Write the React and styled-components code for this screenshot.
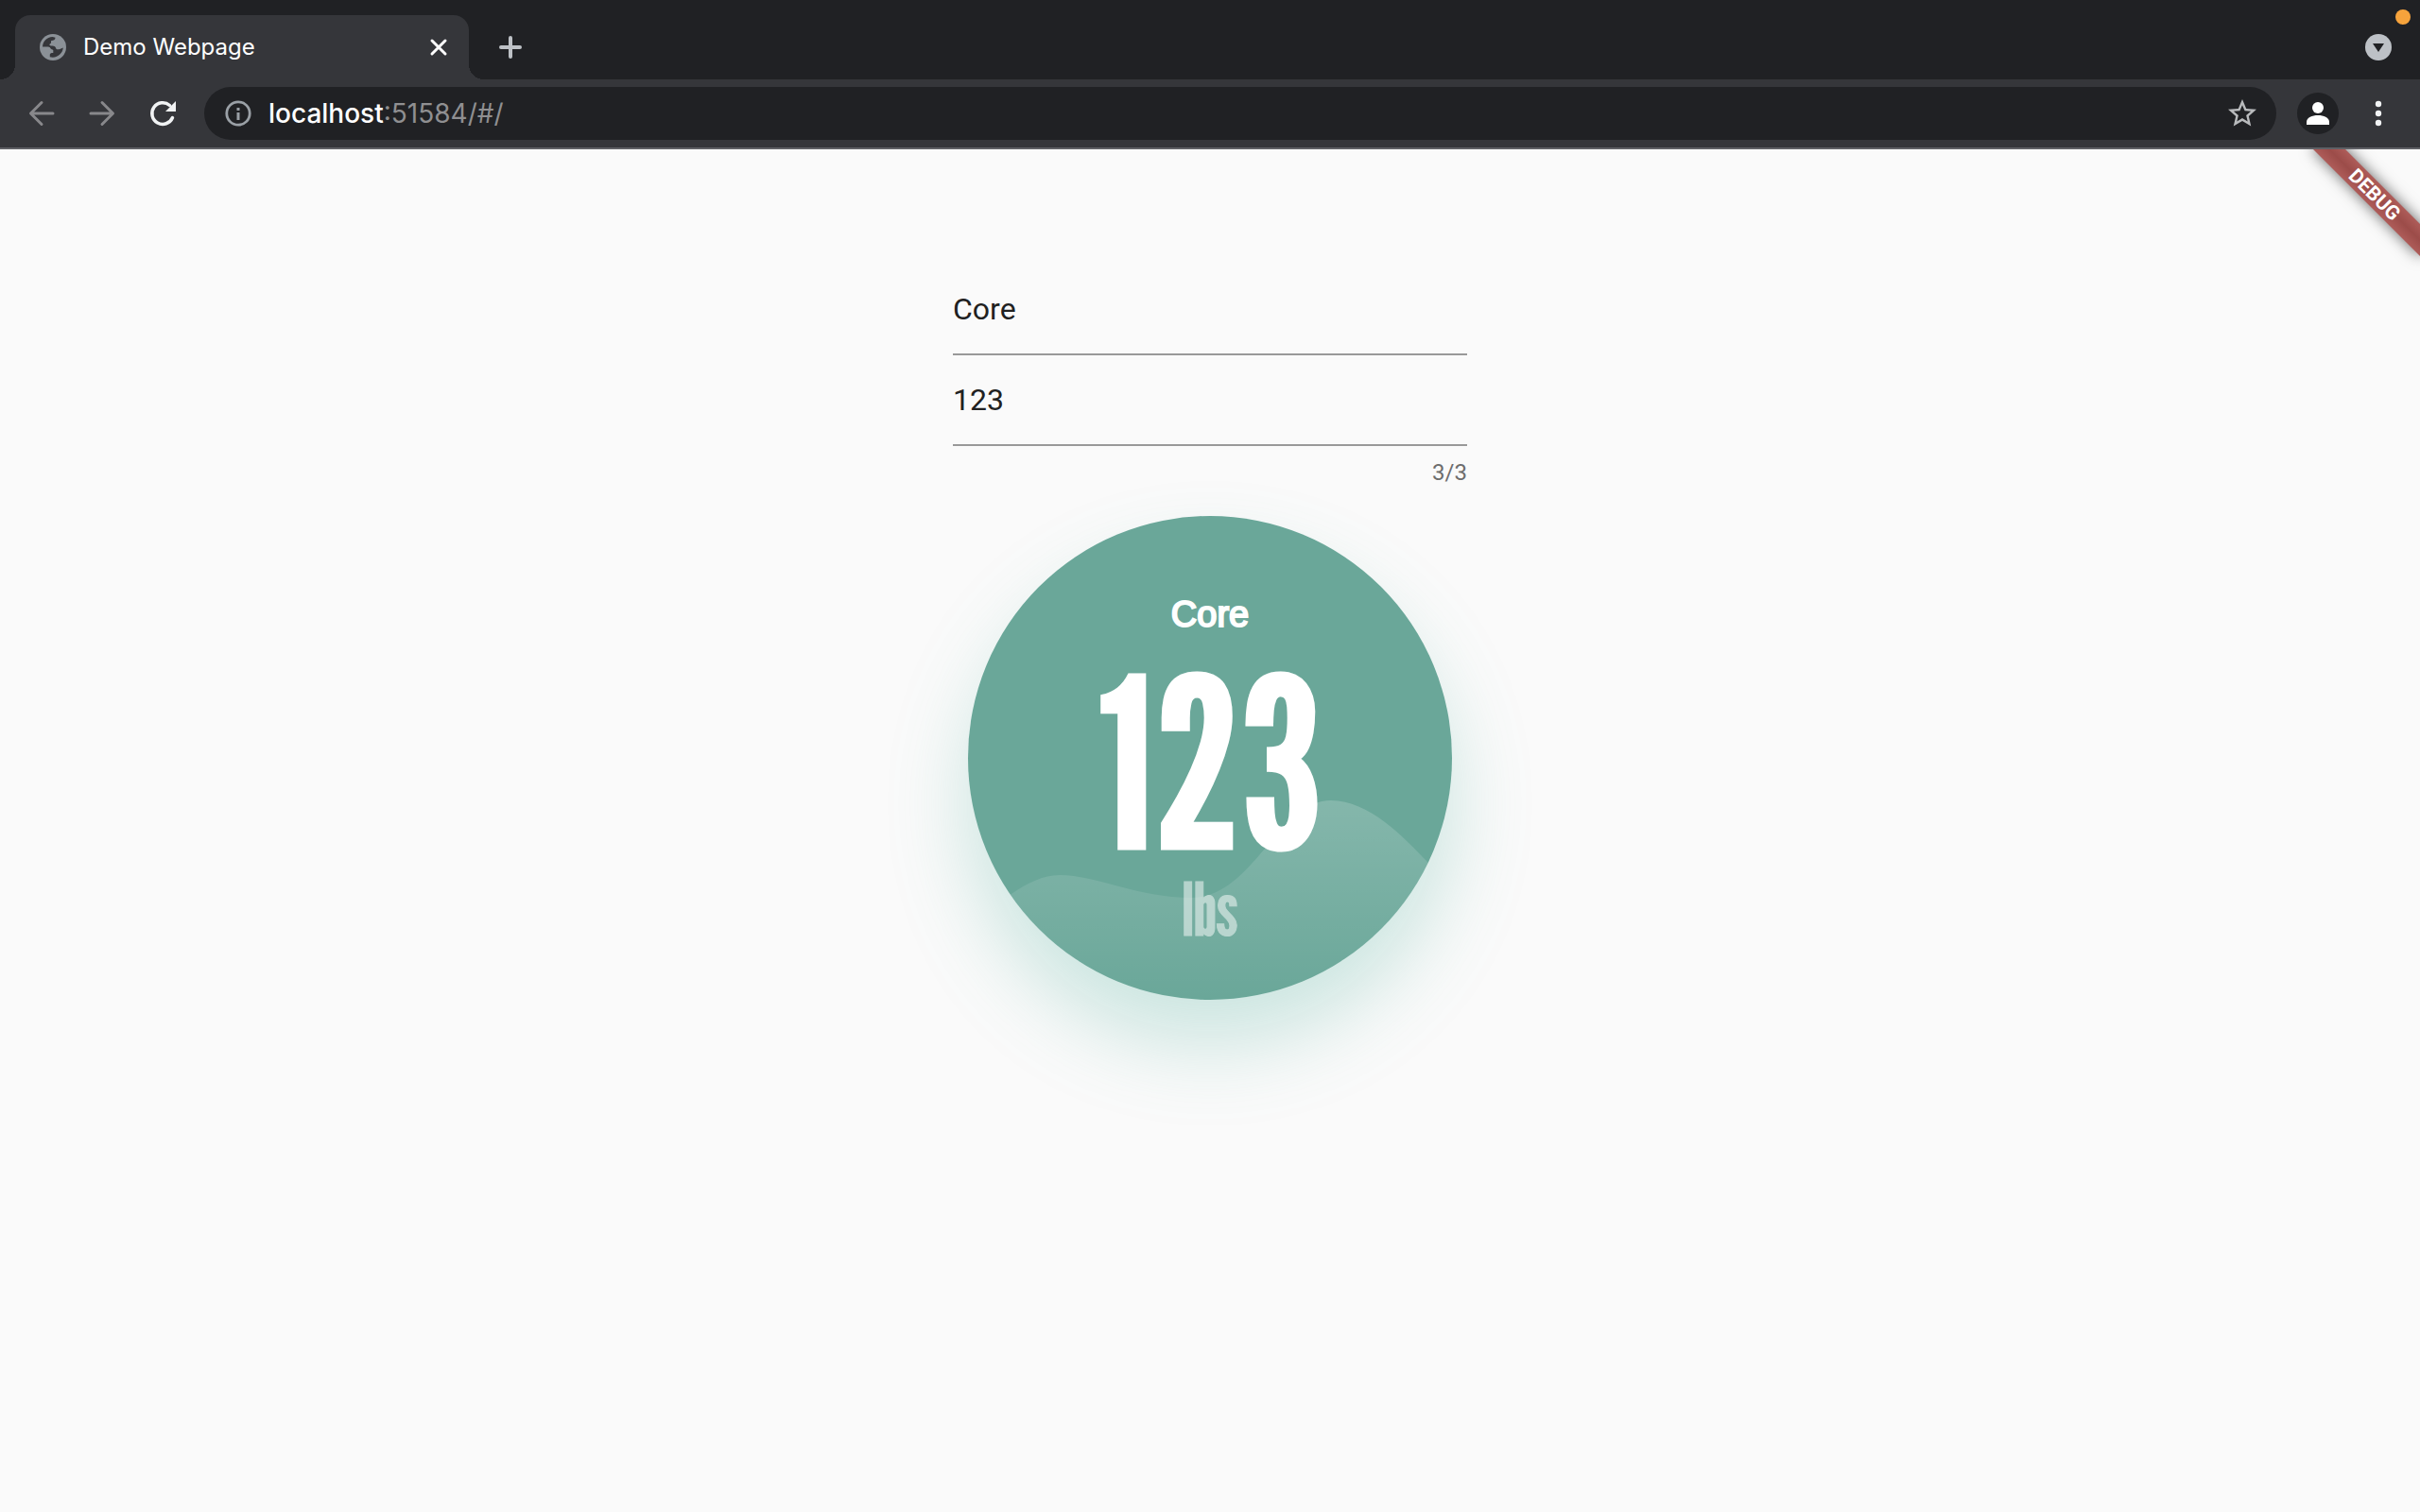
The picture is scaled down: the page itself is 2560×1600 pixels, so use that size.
import React, { useState } from "react";
import styled, { createGlobalStyle } from "styled-components";

const Global = createGlobalStyle`
  *, *::before, *::after { box-sizing: border-box; }
  html, body, #root { height: 100%; }
  body {
    margin: 0;
    background: #fafafa;
    font-family: Inter, Roboto, "Liberation Sans", sans-serif;
  }
  button, input { font: inherit; color: inherit; border: 0; padding: 0; background: none; outline: 0; }
  button { display: flex; align-items: center; justify-content: center; cursor: pointer; }
  svg { display: block; flex: none; }
`;

const Browser = styled.div`
  display: flex;
  flex-direction: column;
  min-height: 100%;
`;

const TabStrip = styled.header`
  display: flex;
  align-items: flex-end;
  height: 84px;
  padding: 0 30px 0 16px;
  background: #202124;
  position: relative;
`;

const Tab = styled.div`
  position: relative;
  display: flex;
  align-items: center;
  width: 480px;
  height: 68px;
  padding: 0 20px 0 26px;
  border-radius: 16px 16px 0 0;
  background: #35363a;
  color: #fff;

  &::before, &::after {
    content: "";
    position: absolute;
    bottom: 0;
    width: 16px;
    height: 16px;
  }
  &::before { right: 100%; background: radial-gradient(circle at 0 0, transparent 16px, #35363a 16px); }
  &::after { left: 100%; background: radial-gradient(circle at 100% 0, transparent 16px, #35363a 16px); }
`;

const TabTitle = styled.span`
  flex: 1;
  margin-left: 18px;
  font-size: 24px;
  line-height: 32px;
`;

const IconButton = styled.button`
  width: ${(p) => p.$size || 24}px;
  height: ${(p) => p.$size || 24}px;
  flex: none;
`;

const NewTab = styled(IconButton)`
  margin: 0 auto 18px 28px;
`;

const TabSearch = styled(IconButton)`
  margin-bottom: 20px;
  border-radius: 50%;
  background: #bdc1c6;
`;

const MicDot = styled.span`
  position: absolute;
  top: 10px;
  right: 10px;
  width: 16px;
  height: 16px;
  border-radius: 50%;
  background: #f6a33c;
`;

const Toolbar = styled.nav`
  display: flex;
  align-items: center;
  height: 74px;
  padding: 0 28px;
  background: #35363a;
  border-bottom: 2px solid #5f6065;
`;

const NavGroup = styled.div`
  display: flex;
  gap: 32px;
  margin-right: 28px;
`;

const Omnibox = styled.div`
  flex: 1;
  display: flex;
  align-items: center;
  height: 56px;
  padding: 0 18px 0 20px;
  border-radius: 28px;
  background: #202124;
  font-size: 28px;
  line-height: 36px;
`;

const Address = styled.span`
  flex: 1;
  margin-left: 16px;
  color: #8f8f91;
`;

const Host = styled.span`
  color: #fff;
  font-weight: 500;
`;

const Profile = styled(IconButton)`
  margin: 0 26px 0 22px;
  border-radius: 50%;
  background: #202124;
`;

const Page = styled.main`
  flex: 1;
  position: relative;
  overflow: hidden;
  display: flex;
  flex-direction: column;
  align-items: center;
  padding-top: 122px;
  font-family: Roboto, "Liberation Sans", sans-serif;
`;

const Banner = styled.div`
  position: absolute;
  top: 36px;
  right: -32px;
  width: 160px;
  height: 24px;
  transform: rotate(45deg);
  text-align: center;
  font-size: 21px;
  line-height: 24px;
  font-weight: 700;
  color: #fff;
  background: linear-gradient(#ae5c59, #9c4c49 50%, #ae5c59);
  box-shadow: 0 0 16px rgba(0, 0, 0, 0.6);
`;

const Form = styled.form`
  width: 544px;
`;

const Field = styled.input`
  display: block;
  width: 100%;
  height: 96px;
  border-bottom: 2px solid #999;
  font-size: 32px;
  color: #212121;
`;

const Counter = styled.output`
  display: block;
  margin-top: 14px;
  text-align: right;
  font-size: 24px;
  line-height: 28px;
  color: #6d6d6d;
`;

const Dial = styled.section`
  position: relative;
  display: flex;
  flex-direction: column;
  align-items: center;
  width: 512px;
  height: 512px;
  margin-top: 32px;
  padding-top: 80px;
  border-radius: 50%;
  background: #6aa799;
  color: #fff;
  box-shadow: 0 48px 84px rgba(82, 176, 158, 0.28);
`;

const Wave = styled.svg`
  position: absolute;
  inset: 0;
  border-radius: 50%;
`;

const DialName = styled.h1`
  position: relative;
  margin: 0;
  font: 400 38px/48px "Liberation Sans", sans-serif;
  -webkit-text-stroke: 2px #fff;
`;

const DialValue = styled.strong`
  position: relative;
  margin-top: 32px;
  font: 400 250px/200px "League Gothic", Anton, "Open Sans Condensed", sans-serif;
  -webkit-text-stroke: 3px #fff;
`;

const DialUnit = styled.span`
  position: relative;
  margin-top: 24px;
  font: 400 77px/64px "League Gothic", Anton, "Open Sans Condensed", sans-serif;
  -webkit-text-stroke: 1px #fff;
  opacity: 0.5;
`;

const Stroke = ({ size, color, width = 3, children }) => (
  <svg width={size} height={size} viewBox={`0 0 ${size} ${size}`} fill="none" stroke={color}
    strokeWidth={width} strokeLinecap="round" strokeLinejoin="round" aria-hidden="true">
    {children}
  </svg>
);

export default function App() {
  const [name, setName] = useState("Core");
  const [value, setValue] = useState("123");

  return (
    <>
      <Global />
      <Browser>
        <TabStrip>
          <Tab>
            <svg width="28" height="28" viewBox="0 0 28 28" aria-hidden="true">
              <circle cx="14" cy="14" r="14" fill="#8b9197" />
              <path d="M3 13.500C3.200 8 7.500 3.200 13.500 3l3 .8c0 2.200-1.500 3.200-4.500 3.400v2.300l-1.700 1.500c0 1.500 1 1.500 3 1.500 2.500 0 3.500 1 4 3 .8 1 2 1 4 .5l3.500-1.500c-.5 5.500-5 10-11 10.300l-3-.5v-2.500c0-1.300 1-1.800 3.500-1.800v-3c-1-.8-2.300-.8-2.800-1.700-.5-1.600-2-1.800-4.500-1.800z" fill="#35363a" />
            </svg>
            <TabTitle>Demo Webpage</TabTitle>
            <IconButton aria-label="Close tab">
              <Stroke size={24} color="#fff"><path d="M5 5l14 14M19 5L5 19" /></Stroke>
            </IconButton>
          </Tab>
          <NewTab $size={32} aria-label="New tab">
            <Stroke size={32} color="#bdc1c6" width={4}><path d="M16 6v20M6 16h20" /></Stroke>
          </NewTab>
          <TabSearch $size={28} aria-label="Search tabs">
            <svg width="28" height="28" aria-hidden="true"><path d="M8 10h12l-6 9z" fill="#202124" /></svg>
          </TabSearch>
          <MicDot />
        </TabStrip>

        <Toolbar>
          <NavGroup>
            <IconButton $size={32} aria-label="Back">
              <Stroke size={32} color="#88888b"><path d="M28 16H5M16 4.500L4.500 16 16 27.500" /></Stroke>
            </IconButton>
            <IconButton $size={32} aria-label="Forward">
              <Stroke size={32} color="#88888b"><path d="M4 16h23M16 4.500L27.500 16 16 27.500" /></Stroke>
            </IconButton>
            <IconButton $size={32} aria-label="Reload">
              <Stroke size={32} color="#f1f3f4" width={3.5}>
                <path d="M26.500 20.500A11.300 11.300 0 1 1 23.500 7.500" />
                <path d="M30 3v11H19z" fill="#f1f3f4" stroke="none" />
              </Stroke>
            </IconButton>
          </NavGroup>
          <Omnibox>
            <IconButton $size={32} aria-label="Site information">
              <svg width="32" height="32" aria-hidden="true">
                <circle cx="16" cy="16" r="12.200" fill="none" stroke="#9aa0a6" strokeWidth="2.800" />
                <path d="M14.500 15h3v8h-3zM14.500 10h3v3h-3z" fill="#9aa0a6" />
              </svg>
            </IconButton>
            <Address><Host>localhost</Host>:51584/#/</Address>
            <IconButton $size={36} aria-label="Bookmark this page">
              <svg width="36" height="36" viewBox="0 0 24 24" fill="#b9bbbd" aria-hidden="true">
                <path d="M22 9.240l-7.190-.62L12 2 9.190 8.630 2 9.240l5.460 4.730L5.820 21 12 17.270 18.180 21l-1.630-7.030L22 9.240zM12 15.400l-3.760 2.270 1-4.280-3.320-2.880 4.380-.38L12 6.100l1.710 4.040 4.380.38-3.320 2.880 1 4.280L12 15.400z" />
              </svg>
            </IconButton>
          </Omnibox>
          <Profile $size={44} aria-label="Profile">
            <svg width="44" height="44" fill="#fff" aria-hidden="true">
              <circle cx="22" cy="16" r="6" />
              <path d="M10 34v-3c0-4.500 6-7 12-7s12 2.500 12 7v3z" />
            </svg>
          </Profile>
          <IconButton $size={32} aria-label="Menu">
            <svg width="32" height="32" fill="#f1f3f4" aria-hidden="true">
              <circle cx="16" cy="6" r="3.200" /><circle cx="16" cy="16" r="3.200" /><circle cx="16" cy="26" r="3.200" />
            </svg>
          </IconButton>
        </Toolbar>

        <Page>
          <Banner>DEBUG</Banner>
          <Form>
            <Field aria-label="Name" value={name} onChange={(e) => setName(e.target.value)} />
            <Field aria-label="Value" maxLength={3} value={value} onChange={(e) => setValue(e.target.value)} />
            <Counter>{value.length}/3</Counter>
          </Form>
          <Dial>
            <Wave width="512" height="512" viewBox="0 0 512 512" aria-hidden="true">
              <defs>
                <linearGradient id="wave" x1="0" y1="301" x2="0" y2="512" gradientUnits="userSpaceOnUse">
                  <stop offset="0" stopColor="#fff" stopOpacity="0.18" />
                  <stop offset="1" stopColor="#fff" stopOpacity="0" />
                </linearGradient>
              </defs>
              <path d="M0 430C30 415 62 380 97 380C135 380 180 404 236 404C302 404 328 301 384 301C424 301 460 339 487 367L512 395V512H0Z" fill="url(#wave)" />
            </Wave>
            <DialName>{name}</DialName>
            <DialValue>{value}</DialValue>
            <DialUnit>lbs</DialUnit>
          </Dial>
        </Page>
      </Browser>
    </>
  );
}
